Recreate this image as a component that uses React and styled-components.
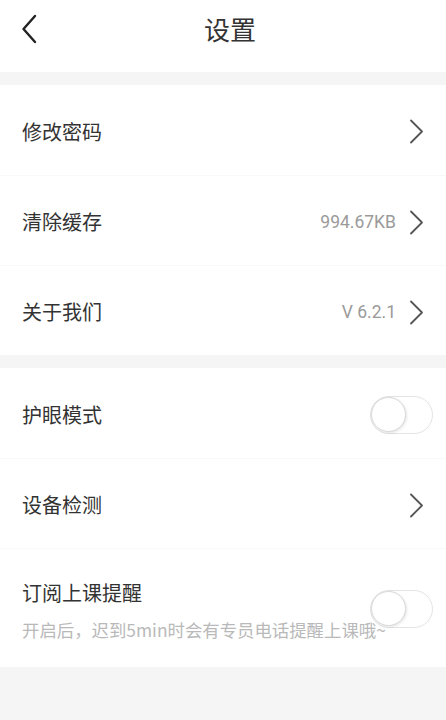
import React, { useState } from 'react';
import styled, { createGlobalStyle } from 'styled-components';

const GlobalStyle = createGlobalStyle`
  html, body {
    margin: 0;
    padding: 0;
    background: #f5f5f5;
  }
  body {
    font-family: "Noto Sans CJK SC", "Noto Sans", sans-serif;
    color: #333;
  }
  * {
    box-sizing: border-box;
  }
`;

const BackIcon = () => (
  <svg width='16' height='30' viewBox='0 0 16 30' fill='none'>
    <path d='M14 2 L2.5 15 L14 28' stroke='#222' strokeWidth='2.4' strokeLinecap='round' strokeLinejoin='round' />
  </svg>
);

const ArrowIcon = () => (
  <svg width='15' height='25' viewBox='0 0 15 25' fill='none'>
    <path d='M2 1.5 L13 12.5 L2 23.5' stroke='#555' strokeWidth='1.8' strokeLinecap='round' strokeLinejoin='round' />
  </svg>
);

const groups = [
  [
    { id: 'pwd', label: '修改密码', type: 'link' },
    { id: 'cache', label: '清除缓存', type: 'link', value: '994.67KB' },
    { id: 'about', label: '关于我们', type: 'link', value: 'V 6.2.1' }
  ],
  [
    { id: 'eye', label: '护眼模式', type: 'switch' },
    { id: 'device', label: '设备检测', type: 'link' },
    { id: 'remind', label: '订阅上课提醒', type: 'switch', note: '开启后，迟到5min时会有专员电话提醒上课哦~' }
  ]
];

const App = () => {
  const [toggles, setToggles] = useState({ eye: false, remind: false });

  const flip = id => setToggles({ ...toggles, [id]: !toggles[id] });

  return (
    <Page>
      <GlobalStyle />
      <Header>
        <BackButton>
          <BackIcon />
        </BackButton>
        <Title>设置</Title>
        <span />
      </Header>
      {groups.map((group, i) => (
        <Group key={i}>
          {group.map(item => (
            <Row key={item.id} tall={!!item.note}>
              <Label>{item.label}</Label>
              {item.type === 'link' ? (
                <Side>
                  {item.value && <Value>{item.value}</Value>}
                  <ArrowIcon />
                </Side>
              ) : (
                <Switch on={toggles[item.id]} onClick={() => flip(item.id)} span={item.note ? 2 : 1}>
                  <Knob on={toggles[item.id]} />
                </Switch>
              )}
              {item.note && <Note>{item.note}</Note>}
            </Row>
          ))}
        </Group>
      ))}
    </Page>
  );
};

export default App;

const Page = styled.div`
  min-height: 100vh;
  width: 100%;
  background: #f5f5f5;
  display: flex;
  flex-direction: column;
  gap: 13px;
  padding-bottom: 20px;
`;

const Header = styled.header`
  display: grid;
  grid-template-columns: 1fr auto 1fr;
  align-items: center;
  height: 72px;
  padding-bottom: 14px;
  background: #fff;
`;

const BackButton = styled.button`
  justify-self: start;
  display: flex;
  align-items: center;
  margin-left: 21px;
  padding: 0;
  border: none;
  background: none;
`;

const Title = styled.h1`
  margin: 0 0 0 14px;
  font-size: 26px;
  font-weight: 400;
  line-height: 1;
  color: #333;
`;

const Group = styled.section`
  background: #fff;
  display: flex;
  flex-direction: column;
`;

const Row = styled.div`
  display: grid;
  grid-template-columns: 1fr auto;
  align-items: center;
  height: ${({ tall }) => (tall ? '119px' : '90px')};
  padding: ${({ tall }) => (tall ? '30px 13px 26px 22px' : '3px 13px 0 22px')};
  row-gap: 11px;

  & + & {
    border-top: 1px solid #f8f8f8;
  }
`;

const Label = styled.span`
  grid-column: 1;
  grid-row: 1;
  font-size: 20px;
  line-height: 28px;
  color: #333;
`;

const Side = styled.div`
  grid-column: 2;
  display: flex;
  align-items: center;
  gap: 13px;
  margin-right: 9px;
`;

const Value = styled.span`
  font-family: Roboto, "Noto Sans CJK SC", sans-serif;
  font-size: 17.5px;
  color: #9a9a9a;
`;

const Note = styled.p`
  grid-column: 1 / -1;
  grid-row: 2;
  margin: 0;
  font-size: 17.4px;
  line-height: 24px;
  color: #b9b9b9;
  white-space: nowrap;
`;

const Switch = styled.button`
  grid-column: 2;
  grid-row: 1 / span ${({ span }) => span};
  align-self: center;
  position: relative;
  z-index: 1;
  width: 63px;
  height: 38px;
  margin-top: ${({ span }) => (span > 1 ? '-4px' : '0')};
  padding: 0;
  border-radius: 19px;
  border: 1.5px solid #e4e4e4;
  background: ${({ on }) => (on ? '#4cd964' : 'rgba(255, 255, 255, 0.75)')};
  cursor: pointer;
`;

const Knob = styled.span`
  position: absolute;
  top: 0;
  left: ${({ on }) => (on ? '26px' : '0')};
  width: 35px;
  height: 35px;
  border-radius: 50%;
  background: #fff;
  border: 1.5px solid #d8d8d8;
  box-shadow: 1px 1px 3px rgba(0, 0, 0, 0.1);
`;
